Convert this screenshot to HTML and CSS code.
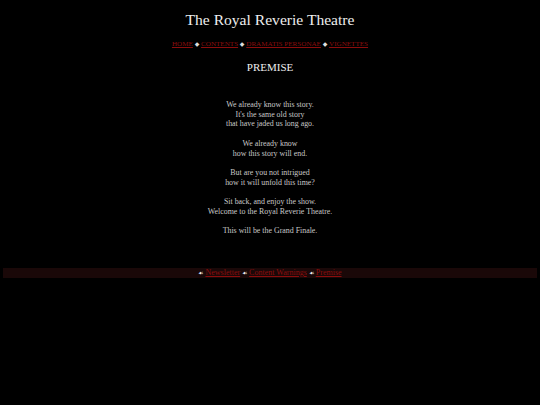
FILE: index.html
```html
<!DOCTYPE html>
<html>
<head>
<meta charset="utf-8">
<link rel="stylesheet" href="styles.css">
</head>
<body>
<header class="top">
  <h1 class="title">The Royal Reverie Theatre</h1>
  <nav class="nav"><a href="#">HOME</a> <span class="sep">◆</span> <a href="#">CONTENTS</a> <span class="sep">◆</span> <a href="#">DRAMATIS PERSONAE</a> <span class="sep">◆</span> <a href="#">VIGNETTES</a></nav>
</header>
<main class="content">
  <h2 class="heading">PREMISE</h2>
  <div class="poem">
    <p>We already know this story.<br>It's the same old story<br>that have jaded us long ago.</p>
    <p>We already know<br>how this story will end.</p>
    <p>But are you not intrigued<br>how it will unfold this time?</p>
    <p>Sit back, and enjoy the show.<br>Welcome to the Royal Reverie Theatre.</p>
    <p>This will be the Grand Finale.</p>
  </div>
</main>
<footer class="footer">
  <span class="ico">☙</span> <a href="#">Newsletter</a> <span class="ico">☙</span> <a href="#">Content Warnings</a> <span class="ico">☙</span> <a href="#">Premise</a>
</footer>
</body>
</html>
```
FILE: styles.css
```css
html, body { background: #000; }
body {
  margin: 0;
  padding: 8px 3px 0;
  font-family: "Liberation Serif", "DejaVu Serif", serif;
  color: #c8c8c8;
  text-align: center;
}
a { color: #8b0d0d; }
.title {
  margin: 2px 0 0;
  font-size: 15.6px;
  font-weight: normal;
  color: #eee;
  line-height: 20px;
}
.nav {
  margin-top: 9px;
  font-size: 7.1px;
  line-height: 11px;
}
.sep { color: #ddd; font-size: 6px; }
.heading {
  margin: 10px 0 0;
  font-size: 11px;
  font-weight: normal;
  color: #eee;
  line-height: 14px;
}
.poem {
  margin-top: 26px;
  font-size: 7.9px;
  line-height: 9.7px;
}
.poem p { margin: 0 0 9.7px; }
.footer {
  margin-top: 32px;
  background: #1a0808;
  font-size: 8px;
  line-height: 10px;
  color: #ddd;
}
.ico { font-size: 6px; color: #eee; }
```
